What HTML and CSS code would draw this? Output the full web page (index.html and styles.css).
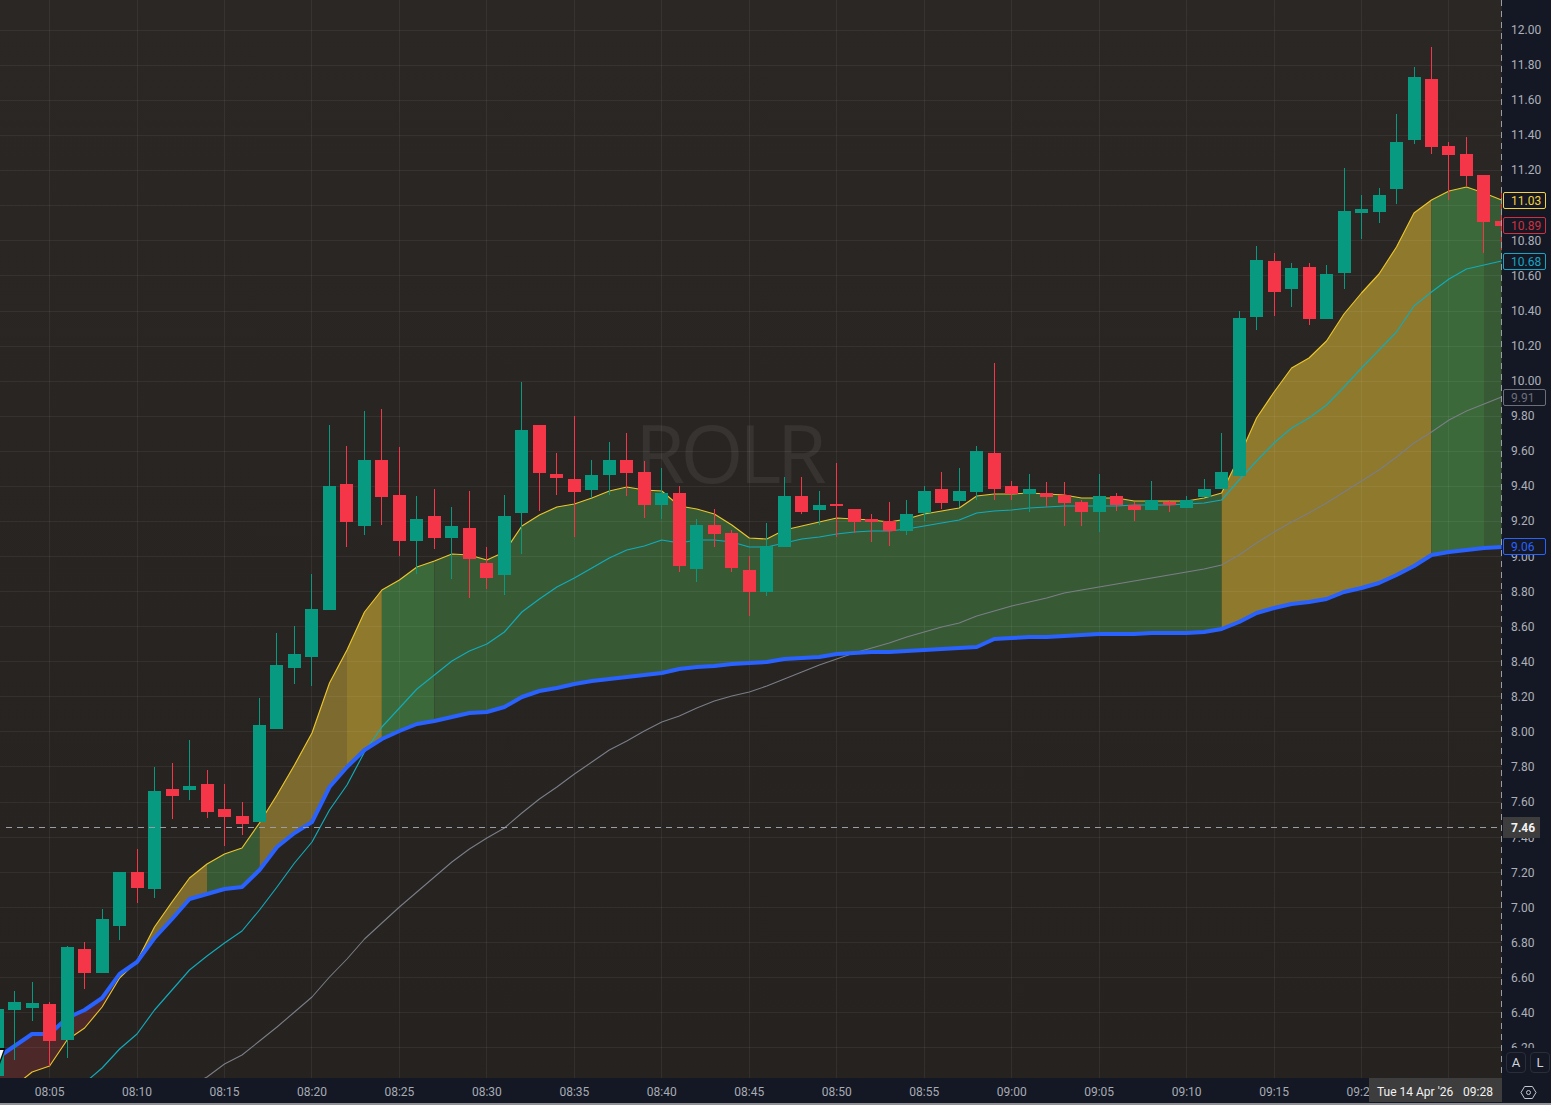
FILE: index.html
```html
<!DOCTYPE html>
<html lang="en">
<head>
<meta charset="utf-8">
<title>ROLR</title>
<link rel="stylesheet" href="styles.css">
</head>
<body>
<div class="app">
  <div class="pane">
    <svg id="chart" class="chart" width="1502" height="1078" viewBox="0 0 1502 1078" xmlns="http://www.w3.org/2000/svg"></svg>
  </div>
  <div class="price-axis" id="priceAxis">
    <div class="flag flag-yellow">11.03</div>
    <div class="flag flag-red">10.89</div>
    <div class="flag flag-cyan">10.68</div>
    <div class="flag flag-grey">9.91</div>
    <div class="flag flag-blue">9.06</div>
    <div class="flag-cross">7.46</div>
    <div class="scale-buttons">
      <span class="scale-btn">A</span>
      <span class="scale-btn">L</span>
    </div>
  </div>
  <div class="time-axis" id="timeAxis">
    <div class="time-cross"><span>Tue 14 Apr '26</span><span>09:28</span></div>
  </div>
  <div class="corner">
    <svg class="corner-icon" width="17" height="15" viewBox="0 0 17 15" xmlns="http://www.w3.org/2000/svg">
      <path d="M1 7.5 L4.6 1.5 H12.4 L16 7.5 L12.4 13.5 H4.6 Z"/>
      <circle cx="8.5" cy="7.5" r="2"/>
    </svg>
  </div>
  <div class="footer"></div>
</div>
<script src="chart.js"></script>
</body>
</html>
```
FILE: styles.css
```css
* { box-sizing: border-box; }
html, body { margin: 0; padding: 0; height: 100%; background: #131824; overflow: hidden; }
body { font-family: "Roboto", "Liberation Sans", sans-serif; font-size: 12px; }

.app {
  display: grid;
  grid-template-columns: 1502px 49px;
  grid-template-rows: 1078px 25px 2px;
  width: 1551px;
  height: 1105px;
}
.pane { background: linear-gradient(180deg, #2a2724 0%, #26221f 100%); overflow: hidden; }
.chart { display: block; }
.watermark { font-family: "Open Sans", sans-serif; font-size: 81px; letter-spacing: -4.5px; fill: rgba(255,255,255,.065); }
.grid-line { stroke: rgba(255,255,255,.06); stroke-width: 1; shape-rendering: crispEdges; }
.fill-red { fill: #4c2829; }
.fill-gold-dark { fill: #7d6a2e; }
.fill-gold { fill: #8e792c; }
.fill-green { fill: #375a35; }
.fill-green-light { fill: #3b6939; }
.line { fill: none; stroke-linejoin: round; }
.line-grey { stroke: #7b7e88; stroke-width: 1.05; }
.line-cyan { stroke: #10acbd; stroke-width: 1.15; }
.line-yellow { stroke: #ecc62c; stroke-width: 1.15; }
.line-blue { stroke: #2962ff; stroke-width: 4; }
.up { fill: #089a80; }
.down { fill: #f53649; }
.candle { shape-rendering: crispEdges; }
.marker-edge { fill: #0d0d0d; }
.marker-face { fill: #f5f5f5; }
.cross { stroke: #9a9da5; stroke-width: 1; stroke-dasharray: 6 5; shape-rendering: crispEdges; }

.price-axis { position: relative; overflow: hidden; background: #141825; color: #adb0b9; }
.price-tick { position: absolute; left: 9px; line-height: 16px; height: 16px; }
.flag {
  position: absolute; left: 1px; width: 43px; height: 17px; padding-left: 7px;
  border: 1px solid; border-radius: 2px; background: #141825; line-height: 16px; z-index: 2;
}
.flag-yellow { top: 192px; color: #f6d23c; border-color: #f6d23c; }
.flag-red { top: 217px; color: #d0303f; border-color: #d0303f; }
.flag-cyan { top: 253px; color: #16a5c4; border-color: #16a5c4; }
.flag-grey { top: 389px; color: #6c6f79; border-color: #6c6f79; }
.flag-blue { top: 538px; color: #2962ff; border-color: #2962ff; }
.flag-cross {
  position: absolute; left: 1px; top: 817px; width: 37px; height: 21px; padding-left: 8px;
  background: #3d3d3d; color: #f2f2f2; font-weight: 700; line-height: 22px; z-index: 2;
}
.scale-buttons {
  position: absolute; left: 0; right: 0; bottom: 0; height: 30px; padding: 4px 1px 5px 4px;
  display: flex; gap: 4px; background: #141825; z-index: 3;
}
.scale-btn {
  flex: 0 0 20px; height: 21px; border: 1px solid #2a2e39; border-radius: 4px;
  color: #d1d4dc; font-size: 13px; line-height: 19px; text-align: center;
}

.time-axis { position: relative; overflow: hidden; background: #131824; color: #a8abb4; }
.time-tick { position: absolute; top: 6px; line-height: 16px; transform: translateX(-50%); }
.time-cross {
  position: absolute; right: 0; top: 0; width: 133px; height: 24px; padding: 3px 9px 0 8px;
  display: flex; justify-content: space-between; align-items: center;
  background: #3d3d3d; color: #f2f2f2; z-index: 2;
}
.corner { display: flex; align-items: center; justify-content: center; padding: 3px 0 0 4px; background: #131824; }
.corner-icon { fill: none; stroke: #c4c7cf; stroke-width: 1; display: block; }
.footer { grid-column: 1 / -1; background: #8e9196; }
```
FILE: chart.js
```js
var SVG = 'http://www.w3.org/2000/svg';
var svg = document.getElementById('chart');

function cx(m) { return 49.586 + 17.4925 * (m - 5); }
function el(name, attrs, parent, text) {
  var e = document.createElementNS(SVG, name);
  for (var k in attrs) e.setAttribute(k, attrs[k]);
  if (text) e.textContent = text;
  (parent || svg).appendChild(e);
  return e;
}

var yellow = {2:1110,3:1086,4:1072,5:1066,6:1040,7:1028,8:1007,9:978,10:961,11:927,12:902,13:878,14:864,15:854,16:848,17:823,18:795,19:765,20:733,21:683,22:650,23:612,24:590,25:580,26:567,27:561,28:554,29:555,30:560,31:552,32:526,33:515,34:507,35:504,36:498,37:491,38:487,39:490,40:491,41:506,42:509,43:514,44:525,45:538,46:539,47:530,48:526,49:522,50:518,51:519,52:520,53:522,54:519,55:514,56:511,57:508,58:496,59:494,60:494,61:493,62:494,63:495,64:498,65:498,66:498,67:501,68:501,69:501,70:501,71:498,72:493,73:457,74:418,75:392,76:368,77:358,78:341,79:314,80:293,81:274,82:247,83:213,84:200,85:191,86:187,87:193,88:200};
var cyan = {6:1100,7:1083,8:1068,9:1049,10:1034,11:1010,12:990,13:970,14:956,15:943,16:931,17:910,18:887,19:863,20:842,21:810,22:785,23:752,24:727,25:708,26:689,27:675,28:661,29:651,30:644,31:632,32:612,33:599,34:587,35:578,36:568,37:558,38:550,39:546,40:540,41:543,42:540,43:540,44:542,45:547,46:547,47:543,48:539,49:537,50:534,51:532,52:531,53:531,54:529,55:526,56:523,57:520,58:513,59:511,60:510,61:508,62:507,63:506,64:506,65:506,66:506,67:505,68:505,69:505,70:504,71:503,72:500,73:480,74:461,75:443,76:428,77:418,78:405,79:387,80:368,81:350,82:332,83:306,84:292,85:279,86:269,87:265,88:261};
var grey = {13:1086,14:1077,15:1064,16:1055,17:1041,18:1027,19:1012,20:997,21:977,22:959,23:939,24:923,25:907,26:892,27:877,28:862,29:849,30:838,31:828,32:813,33:799,34:787,35:774,36:762,37:750,38:741,39:731,40:722,41:716,42:708,43:701,44:696,45:692,46:686,47:679,48:672,49:665,50:659,51:653,52:648,53:643,54:637,55:632,56:627,57:623,58:616,59:611,60:606,61:602,62:598,63:593,64:590,65:587,66:584,67:581,68:578,69:575,70:572,71:569,72:565,73:555,74:543,75:532,76:522,77:513,78:503,79:492,80:481,81:470,82:457,83:443,84:432,85:420,86:411,87:404,88:397};
var blue = {1:1070,2:1058,3:1046,4:1034,5:1034,6:1018,7:1010,8:998,9:974,10:962,11:938,12:919,13:899,14:894,15:889,16:887,17:870,18:847,19:833,20:822,21:787,22:767,23:750,24:739,25:731,26:724,27:721,28:717,29:713,30:712,31:707,32:697,33:691,34:688,35:684,36:681,37:679,38:677,39:675,40:673,41:669,42:667,43:666,44:664,45:663,46:662,47:659,48:658,49:657,50:654,51:653,52:652,53:652,54:651,55:650,56:649,57:648,58:647,59:639,60:638,61:637,62:637,63:636,64:635,65:634,66:634,67:634,68:633,69:633,70:633,71:632,72:629,73:622,74:613,75:608,76:604,77:602,78:599,79:592,80:588,81:583,82:575,83:566,84:555,85:552,86:550,87:548,88:547};

/* minute, body top, body bottom, wick top, wick bottom, direction */
var candles = [
[2,1009,1076,1009,1076,'u'],[3,1002,1010,991,1060,'u'],[4,1003,1008,982,1021,'u'],[5,1004,1041,1002,1066,'d'],
[6,947,1040,946,1058,'u'],[7,949,973,942,989,'d'],[8,919,973,909,973,'u'],[9,872,926,872,940,'u'],
[10,872,888,849,903,'d'],[11,791,889,767,898,'u'],[12,789,796,763,819,'d'],[13,786,790,740,800,'u'],
[14,784,812,770,818,'d'],[15,809,817,784,846,'d'],[16,816,824,802,835,'d'],[17,725,822,698,822,'u'],
[18,665,729,633,729,'u'],[19,654,668,626,684,'u'],[20,609,657,574,686,'u'],[21,486,610,425,610,'u'],
[22,484,522,446,547,'d'],[23,460,526,411,535,'u'],[24,460,497,409,525,'d'],[25,495,541,447,556,'d'],
[26,519,541,496,574,'u'],[27,516,538,489,549,'d'],[28,526,538,507,579,'u'],[29,528,559,491,598,'d'],
[30,563,578,547,589,'d'],[31,516,575,495,595,'u'],[32,430,513,382,554,'u'],[33,425,473,425,511,'d'],
[34,474,478,453,495,'d'],[35,479,492,416,537,'d'],[36,475,490,460,498,'u'],[37,460,475,442,495,'u'],
[38,460,473,433,496,'d'],[39,472,505,461,518,'d'],[40,493,505,468,519,'u'],[41,493,566,486,572,'d'],
[42,525,569,519,582,'u'],[43,525,534,509,547,'d'],[44,533,568,530,572,'d'],[45,570,592,556,616,'d'],
[46,546,592,523,596,'u'],[47,496,547,477,547,'u'],[48,496,512,477,514,'d'],[49,505,510,491,525,'u'],
[50,504,506,463,537,'d'],[51,509,522,509,533,'d'],[52,519,522,514,542,'d'],[53,521,531,502,546,'d'],
[54,514,531,500,535,'u'],[55,491,513,486,521,'u'],[56,489,503,472,509,'d'],[57,491,501,468,507,'u'],
[58,451,492,446,500,'u'],[59,453,489,363,500,'d'],[60,486,494,481,500,'d'],[61,489,494,474,512,'u'],
[62,493,497,482,507,'d'],[63,495,503,482,526,'d'],[64,502,512,500,526,'d'],[65,496,512,474,532,'u'],
[66,496,505,493,511,'d'],[67,505,510,502,521,'d'],[68,500,510,481,510,'u'],[69,502,505,500,512,'d'],
[70,500,508,496,508,'u'],[71,489,497,479,497,'u'],[72,472,489,433,489,'u'],[73,318,476,311,476,'u'],
[74,260,317,246,330,'u'],[75,261,292,253,316,'d'],[76,268,289,263,307,'u'],[77,267,319,263,325,'d'],
[78,274,319,265,319,'u'],[79,211,273,168,289,'u'],[80,209,213,195,239,'u'],[81,195,212,188,223,'u'],
[82,142,189,114,204,'u'],[83,77,140,67,144,'u'],[84,79,147,47,154,'d'],[85,146,155,142,200,'d'],
[86,154,176,137,186,'d'],[87,175,222,175,253,'d'],[88,221,226,188,250,'d']
];

function points(series) {
  var out = [];
  for (var m in series) out.push(cx(+m).toFixed(1) + ',' + series[m]);
  return out.join(' ');
}

el('text', {x: 635, y: 483, 'class': 'watermark'}, svg, 'ROLR');

[[2,10,'fill-red'],[10,14,'fill-gold-dark'],[14,17,'fill-green'],[17,22,'fill-gold-dark'],[22,24,'fill-gold'],
 [24,27,'fill-green-light'],[27,72,'fill-green'],[72,84,'fill-gold'],[84,87,'fill-green-light'],[87,88,'fill-green']]
.forEach(function (r) {
  var top = [], bottom = [];
  for (var m = r[0]; m <= r[1]; m++) {
    top.push(cx(m).toFixed(1) + ',' + yellow[m]);
    bottom.unshift(cx(m).toFixed(1) + ',' + blue[m]);
  }
  el('polygon', {points: top.concat(bottom).join(' '), 'class': r[2]});
});

var i, y;
for (i = 0; i < 17; i++) {
  var gx = Math.round(cx(5 + i * 5) - 6.5) + 6.5;
  el('line', {x1: gx, x2: gx, y1: 0, y2: 1078, 'class': 'grid-line'});
}
for (i = 0; i < 30; i++) {
  y = Math.round(30 + 35.07 * i) + 0.5;
  el('line', {x1: 0, x2: 1502, y1: y, y2: y, 'class': 'grid-line'});
}

el('polyline', {points: points(grey), 'class': 'line line-grey'});
el('polyline', {points: points(cyan), 'class': 'line line-cyan'});
el('polyline', {points: points(yellow), 'class': 'line line-yellow'});
el('polyline', {points: points(blue), 'class': 'line line-blue'});

candles.forEach(function (c) {
  var left = Math.round(cx(c[0]) - 6.5);
  var cls = 'candle ' + (c[5] === 'u' ? 'up' : 'down');
  el('rect', {x: left + 6, y: c[3], width: 1, height: c[4] - c[3], 'class': cls});
  el('rect', {x: left, y: c[1], width: 13, height: c[2] - c[1], 'class': cls});
});

el('polygon', {points: '0,1048 5,1048 5,1050 0,1064', 'class': 'marker-edge'});
el('polygon', {points: '0,1050 3.6,1050 0,1060', 'class': 'marker-face'});

el('line', {x1: 6, x2: 1501, y1: 827.5, y2: 827.5, 'class': 'cross'});
el('line', {x1: 1501.5, x2: 1501.5, y1: 0, y2: 1078, 'class': 'cross'});

var axis = document.getElementById('priceAxis');
for (i = 0; i < 30; i++) {
  var tick = document.createElement('div');
  tick.className = 'price-tick';
  tick.style.top = Math.round(21.8 + 35.12 * i) + 'px';
  tick.textContent = (12 - 0.2 * i).toFixed(2);
  axis.appendChild(tick);
}

var timeAxis = document.getElementById('timeAxis');
var names = ['08:05','08:10','08:15','08:20','08:25','08:30','08:35','08:40','08:45','08:50','08:55','09:00','09:05','09:10','09:15','09:20'];
names.forEach(function (n, k) {
  var t = document.createElement('div');
  t.className = 'time-tick';
  t.style.left = cx(5 + k * 5).toFixed(1) + 'px';
  t.textContent = n;
  timeAxis.appendChild(t);
});
```
